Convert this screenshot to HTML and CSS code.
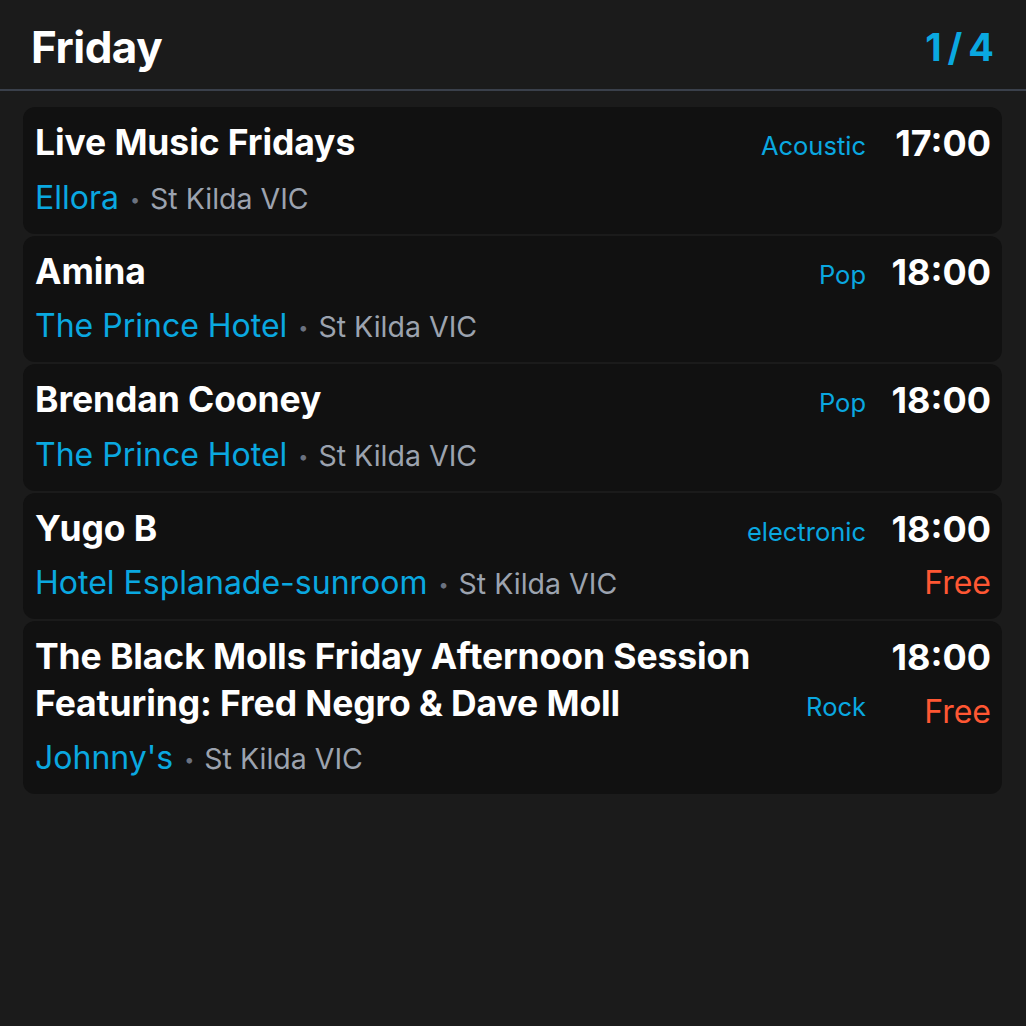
FILE: index.html
```html
<!DOCTYPE html>
<html lang="en">
<head>
<meta charset="utf-8">
<title>Friday</title>
<link rel="stylesheet" href="styles.css">
</head>
<body>
<div class="page">
  <header class="head">
    <h1 class="day">Friday</h1>
    <div class="count">1/4</div>
  </header>
  <div class="list">
    <div class="card">
      <div class="main">
        <div class="top"><div class="title">Live Music Fridays</div><div class="genre">Acoustic</div></div>
        <div class="venue"><span class="place">Ellora</span><span class="dot">•</span><span class="loc">St Kilda VIC</span></div>
      </div>
      <div class="side"><div class="time">17:00</div></div>
    </div>
    <div class="card">
      <div class="main">
        <div class="top"><div class="title">Amina</div><div class="genre">Pop</div></div>
        <div class="venue"><span class="place">The Prince Hotel</span><span class="dot">•</span><span class="loc">St Kilda VIC</span></div>
      </div>
      <div class="side"><div class="time">18:00</div></div>
    </div>
    <div class="card">
      <div class="main">
        <div class="top"><div class="title">Brendan Cooney</div><div class="genre">Pop</div></div>
        <div class="venue"><span class="place">The Prince Hotel</span><span class="dot">•</span><span class="loc">St Kilda VIC</span></div>
      </div>
      <div class="side"><div class="time">18:00</div></div>
    </div>
    <div class="card">
      <div class="main">
        <div class="top"><div class="title">Yugo B</div><div class="genre">electronic</div></div>
        <div class="venue"><span class="place">Hotel Esplanade-sunroom</span><span class="dot">•</span><span class="loc">St Kilda VIC</span></div>
      </div>
      <div class="side"><div class="time">18:00</div><div class="free">Free</div></div>
    </div>
    <div class="card">
      <div class="main">
        <div class="top"><div class="title">The Black Molls Friday Afternoon Session Featuring: Fred Negro &amp; Dave Moll</div><div class="genre">Rock</div></div>
        <div class="venue"><span class="place">Johnny's</span><span class="dot">•</span><span class="loc">St Kilda VIC</span></div>
      </div>
      <div class="side"><div class="time">18:00</div><div class="free">Free</div></div>
    </div>
  </div>
</div>
</body>
</html>
```
FILE: styles.css
```css
* { box-sizing: border-box; }
html, body {
  margin: 0;
  padding: 0;
  background: #1b1b1b;
  height: 100%;
}
body {
  font-family: Inter, "Noto Sans", "Liberation Sans", sans-serif;
  color: #ffffff;
}
.head {
  display: flex;
  align-items: center;
  justify-content: space-between;
  height: 91px;
  padding: 4px 32px 0 31px;
  border-bottom: 2px solid #3a404b;
}
.day {
  margin: 0;
  font-size: 44px;
  font-weight: 700;
  letter-spacing: -0.5px;
}
.count {
  font-size: 38px;
  font-weight: 700;
  color: #0aa8e0;
  letter-spacing: 6px;
  margin-right: -6px;
}
.list {
  display: flex;
  flex-direction: column;
  gap: 2px;
  padding: 16px 24px 0 23px;
}
.card {
  display: flex;
  background: #111111;
  border-radius: 12px;
  padding: 13px 11px 13px 12px;
}
.main {
  flex: 1;
  min-width: 0;
}
.top {
  display: flex;
  align-items: last baseline;
  gap: 24px;
}
.title {
  flex: 1;
  font-size: 35.5px;
  font-weight: 700;
  line-height: 46.5px;
  letter-spacing: -0.1px;
}
.genre {
  font-size: 25.5px;
  color: #0aa8e0;
  line-height: 1;
}
.venue {
  margin-top: 9px;
  font-size: 32px;
  line-height: 44px;
  white-space: nowrap;
}
.place { color: #0aa8e0; }
.dot {
  color: #6b7280;
  font-size: 18px;
  line-height: 0;
  margin: 0 10px 0 11px;
  vertical-align: 3px;
}
.loc {
  color: #9ca3af;
  font-size: 28.5px;
}
.side {
  margin-left: 25px;
  display: flex;
  flex-direction: column;
  align-items: flex-end;
  min-width: 100px;
}
.time {
  font-size: 36px;
  font-weight: 700;
  line-height: 46.5px;
}
.free {
  margin-top: 9px;
  font-size: 32px;
  line-height: 44px;
  color: #ff5733;
}
```
